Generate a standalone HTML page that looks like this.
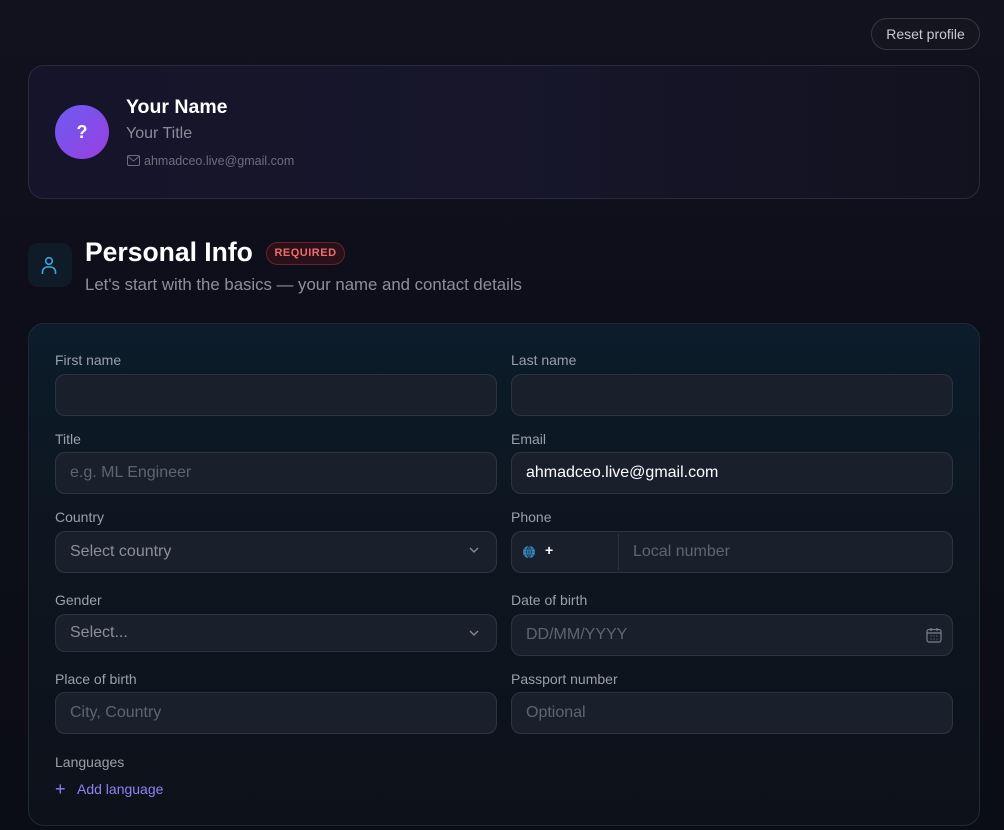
<!DOCTYPE html>
<html><head><style>
*{box-sizing:border-box;margin:0;padding:0}
body{width:1004px;height:830px;overflow:hidden;background:linear-gradient(180deg,#12121f 0%,#0d0e19 40%,#0b0d16 100%);font-family:"Liberation Sans",sans-serif;position:relative;color:#fff}
.abs{position:absolute}
.reset{left:871px;top:18px;width:109px;height:32px;border:1px solid #343644;border-radius:16px;background:#15151f;color:#c9cad3;font-size:14px;text-align:center;line-height:30px}
.pcard{left:28px;top:65px;width:952px;height:134px;border:1px solid #2a2a3c;border-radius:16px;background:linear-gradient(90deg,#15142a,#17162b 50%,#12121f)}
.av{left:55px;top:105px;width:54px;height:54px;border-radius:50%;background:linear-gradient(135deg,#6b5cf2,#9a3fe0);text-align:center;line-height:54px;font-weight:bold;font-size:18px}
.form{left:28px;top:323px;width:952px;height:503px;border:1px solid #1f2a36;border-radius:16px;background:linear-gradient(180deg,#0c1c2a 0%,#0d1620 40%,#0d111a 100%)}
.lbl{font-size:14px;color:#9aa0aa}
.in{height:42px;border:1px solid #2d3440;border-radius:10px;background:#1a202b;font-size:16px;color:#5e6572;padding-left:14px;line-height:40px}
</style></head><body>
<div class="abs reset">Reset profile</div>
<div class="abs pcard"></div>
<div class="abs av">?</div>
<div class="abs" style="left:126px;top:96px;font-size:19.5px;font-weight:bold">Your Name</div>
<div class="abs" style="left:126px;top:125px;font-size:16px;color:#8a8b98">Your Title</div>
<svg class="abs" style="left:127px;top:155px" width="13" height="11" viewBox="0 0 13 11"><rect x="0.5" y="0.5" width="12" height="10" rx="1.5" fill="none" stroke="#6d6e7c"/><path d="M1 1.5l5.5 4.5 5.5-4.5" fill="none" stroke="#6d6e7c"/></svg>
<div class="abs" style="left:144px;top:154px;font-size:12.5px;color:#6d6e7c">ahmadceo.live@gmail.com</div>

<div class="abs" style="left:28px;top:243px;width:44px;height:44px;border-radius:10px;background:#0f1c27"></div>
<svg class="abs" style="left:40px;top:255px" width="20" height="20" viewBox="0 0 20 20"><circle cx="9" cy="6" r="3.3" fill="none" stroke="#3aa5e0" stroke-width="1.6"/><path d="M2.5 19v-2a5 5 0 0 1 5-5h3a5 5 0 0 1 5 5v2" fill="none" stroke="#3aa5e0" stroke-width="1.6"/></svg>
<div class="abs" style="left:85px;top:237px;font-size:26.5px;font-weight:bold">Personal Info</div>
<div class="abs" style="left:266px;top:242px;width:79px;height:23px;border:1px solid #6a2228;border-radius:12px;background:#2a1119;color:#ef6b6b;font-size:11px;font-weight:bold;text-align:center;line-height:21px;letter-spacing:.5px">REQUIRED</div>
<div class="abs" style="left:85px;top:275px;font-size:16.8px;color:#8d8f9a">Let's start with the basics — your name and contact details</div>

<div class="abs form"></div>
<div class="abs lbl" style="left:55px;top:352px">First name</div>
<div class="abs lbl" style="left:511px;top:352px">Last name</div>
<div class="abs in" style="left:55px;top:374px;width:442px"></div>
<div class="abs in" style="left:511px;top:374px;width:442px"></div>
<div class="abs lbl" style="left:55px;top:431px">Title</div>
<div class="abs lbl" style="left:511px;top:431px">Email</div>
<div class="abs in" style="left:55px;top:452px;width:442px">e.g. ML Engineer</div>
<div class="abs in" style="left:511px;top:452px;width:442px;color:#fff">ahmadceo.live@gmail.com</div>
<div class="abs lbl" style="left:55px;top:509px">Country</div>
<div class="abs lbl" style="left:511px;top:509px">Phone</div>
<div class="abs in" style="left:55px;top:531px;width:442px;color:#8a8f99">Select country</div>
<svg class="abs" style="left:469px;top:547px" width="10" height="7"><path d="M1 1l4 4 4-4" fill="none" stroke="#8a8f99" stroke-width="1.3"/></svg>
<div class="abs in" style="left:511px;top:531px;width:442px;padding-left:121px">Local number</div>
<div class="abs" style="left:618px;top:534px;width:1px;height:36px;background:#2d3440"></div>
<svg class="abs" style="left:522px;top:545px" width="14" height="14" viewBox="0 0 14 14"><circle cx="7" cy="7" r="6" fill="#3a8fc8"/><path d="M1 7h12M7 1v12M2 4h10M2 10h10M7 1c-3 3-3 9 0 12M7 1c3 3 3 9 0 12" fill="none" stroke="#123" stroke-width=".6"/></svg>
<div class="abs" style="left:545px;top:542px;font-size:14px;font-weight:bold">+</div>
<div class="abs lbl" style="left:55px;top:592px">Gender</div>
<div class="abs lbl" style="left:511px;top:592px">Date of birth</div>
<div class="abs in" style="left:55px;top:614px;width:442px;height:38px;line-height:36px;color:#8a8f99">Select...</div>
<svg class="abs" style="left:469px;top:630px" width="10" height="7"><path d="M1 1l4 4 4-4" fill="none" stroke="#8a8f99" stroke-width="1.3"/></svg>
<div class="abs in" style="left:511px;top:614px;width:442px">DD/MM/YYYY</div>
<svg class="abs" style="left:926px;top:627px" width="16" height="16" viewBox="0 0 16 16"><rect x="1" y="2.5" width="14" height="12.5" rx="2" fill="none" stroke="#7a808a" stroke-width="1.2"/><path d="M1 6h14M5 1v3M11 1v3" stroke="#7a808a" stroke-width="1.2"/><path d="M4.5 9h1M7.5 9h1M10.5 9h1M4.5 12h1M7.5 12h1M10.5 12h1" stroke="#7a808a"/></svg>
<div class="abs lbl" style="left:55px;top:671px">Place of birth</div>
<div class="abs lbl" style="left:511px;top:671px">Passport number</div>
<div class="abs in" style="left:55px;top:692px;width:442px">City, Country</div>
<div class="abs in" style="left:511px;top:692px;width:442px">Optional</div>
<div class="abs lbl" style="left:55px;top:754px">Languages</div>
<div class="abs" style="left:55px;top:781px;font-size:18px;line-height:16px;color:#8b84f5">+</div>
<div class="abs" style="left:77px;top:781px;font-size:14px;color:#8b84f5">Add language</div>
</body></html>
